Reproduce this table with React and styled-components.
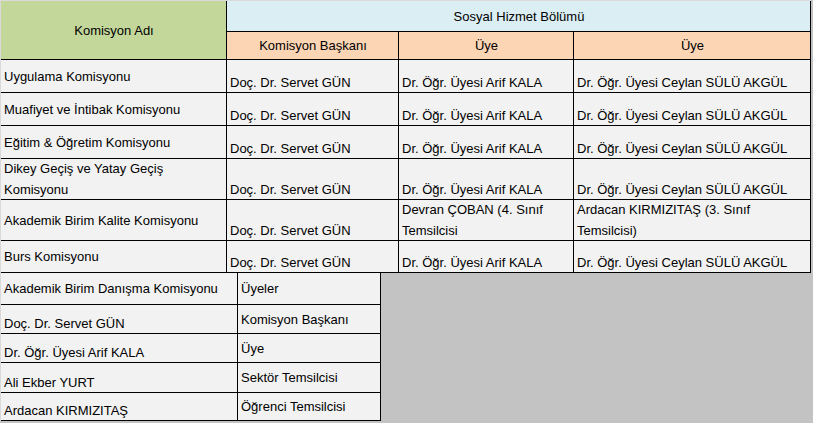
import React from 'react';
import styled, { createGlobalStyle } from 'styled-components';

const GlobalStyle = createGlobalStyle`
  html, body {
    margin: 0;
    padding: 0;
    background: #c3c3c3;
  }
  body {
    font-family: "Liberation Sans", Arial, sans-serif;
    font-size: 13px;
    color: #000;
  }
`;

const Sheet = styled.div`
  width: 813px;
  height: 423px;
  background: #c3c3c3;
  overflow: hidden;
`;

const MainGrid = styled.div`
  display: grid;
  width: max-content;
  grid-template-columns: 226px 172px 175px 237px;
  grid-template-rows: 31px 28px 33px 33px 33px 41px 41px 32px;
  border-top: 1px solid #d9d9d9;
  border-left: 1px solid #d9d9d9;
`;

const BoardGrid = styled.div`
  display: grid;
  width: max-content;
  grid-template-columns: 237px 143px;
  grid-template-rows: 32px 29px 29px 30px 28px;
  border-left: 1px solid #d9d9d9;
`;

const Cell = styled.div`
  box-sizing: border-box;
  display: flex;
  align-items: ${({ $valign }) => ($valign === 'bottom' ? 'flex-end' : 'center')};
  justify-content: ${({ $align }) => ($align === 'center' ? 'center' : 'flex-start')};
  text-align: ${({ $align }) => ($align === 'center' ? 'center' : 'left')};
  padding: 0 2px 0 3px;
  background: ${({ $bg }) => $bg || '#f2f2f2'};
  border-right: 1px solid #000;
  border-bottom: 1px solid #000;
  line-height: 21px;
  white-space: nowrap;
  overflow: hidden;
  ${({ $span }) => $span && `grid-row: span ${$span};`}
  ${({ $colspan }) => $colspan && `grid-column: span ${$colspan};`}
`;

const Text = styled.span`
  margin-bottom: ${({ $tight }) => ($tight ? '-1px' : '0')};
`;

const GREEN = '#c4d79b';
const BLUE = '#daeef3';
const ORANGE = '#fcd5b4';

const chair = 'Doç. Dr. Servet GÜN';
const member1 = 'Dr. Öğr. Üyesi Arif KALA';
const member2 = 'Dr. Öğr. Üyesi Ceylan SÜLÜ AKGÜL';

const commissions = [
  { name: ['Uygulama Komisyonu'], cols: [[chair], [member1], [member2]] },
  { name: ['Muafiyet ve İntibak Komisyonu'], cols: [[chair], [member1], [member2]] },
  { name: ['Eğitim & Öğretim Komisyonu'], cols: [[chair], [member1], [member2]] },
  { name: ['Dikey Geçiş ve Yatay Geçiş', 'Komisyonu'], cols: [[chair], [member1], [member2]] },
  {
    name: ['Akademik Birim Kalite Komisyonu'],
    cols: [[chair], ['Devran ÇOBAN (4. Sınıf', 'Temsilcisi'], ['Ardacan KIRMIZITAŞ (3. Sınıf', 'Temsilcisi)']],
  },
  { name: ['Burs Komisyonu'], cols: [[chair], [member1], [member2]] },
];

const board = [
  ['Akademik Birim Danışma Komisyonu', 'Üyeler', 'center'],
  ['Doç. Dr. Servet GÜN', 'Komisyon Başkanı', 'bottom'],
  ['Dr. Öğr. Üyesi Arif KALA', 'Üye', 'bottom'],
  ['Ali Ekber YURT', 'Sektör Temsilcisi', 'bottom'],
  ['Ardacan KIRMIZITAŞ', 'Öğrenci Temsilcisi', 'bottom'],
];

const Lines = ({ lines }) =>
  lines.map((line, i) => (
    <React.Fragment key={i}>
      {i > 0 && <br />}
      {line}
    </React.Fragment>
  ));

const App = () => {
  return (
    <Sheet>
      <GlobalStyle />
      <MainGrid>
        <Cell $bg={GREEN} $align="center" $span={2}>
          Komisyon Adı
        </Cell>
        <Cell $bg={BLUE} $align="center" $colspan={3}>
          Sosyal Hizmet Bölümü
        </Cell>
        <Cell $bg={ORANGE} $align="center">Komisyon Başkanı</Cell>
        <Cell $bg={ORANGE} $align="center">Üye</Cell>
        <Cell $bg={ORANGE} $align="center">Üye</Cell>
        {commissions.map(row => (
          <React.Fragment key={row.name.join(' ')}>
            <Cell>
              <Text>
                <Lines lines={row.name} />
              </Text>
            </Cell>
            {row.cols.map((col, i) => (
              <Cell key={i} $valign="bottom">
                <Text $tight>
                  <Lines lines={col} />
                </Text>
              </Cell>
            ))}
          </React.Fragment>
        ))}
      </MainGrid>
      <BoardGrid>
        {board.map(([name, role, valign]) => (
          <React.Fragment key={name}>
            <Cell $valign={valign}>
              <Text $tight={valign === 'bottom'}>{name}</Text>
            </Cell>
            <Cell>
              <Text>{role}</Text>
            </Cell>
          </React.Fragment>
        ))}
      </BoardGrid>
    </Sheet>
  );
};

export default App;
